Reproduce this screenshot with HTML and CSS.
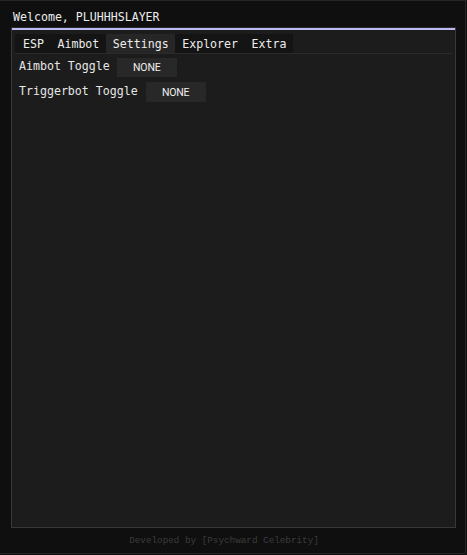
FILE: index.html
```html
<!DOCTYPE html>
<html>
<head>
<meta charset="utf-8">
<link rel="stylesheet" href="styles.css">
</head>
<body>
<div class="window">
  <div class="title">Welcome, PLUHHHSLAYER</div>
  <div class="panel">
    <div class="tabs">
      <span class="tab">ESP</span>
      <span class="tab">Aimbot</span>
      <span class="tab active">Settings</span>
      <span class="tab">Explorer</span>
      <span class="tab">Extra</span>
    </div>
    <div class="sep"></div>
    <div class="content">
      <div class="row">
        <span class="label">Aimbot Toggle</span>
        <span class="btn">NONE</span>
      </div>
      <div class="row">
        <span class="label">Triggerbot Toggle</span>
        <span class="btn">NONE</span>
      </div>
    </div>
  </div>
  <div class="footer">Developed by [Psychward Celebrity]</div>
</div>
</body>
</html>
```

FILE: styles.css
```css
html, body {
  margin: 0;
  padding: 0;
  background: #0f0f0f;
}
body {
  font-family: "DejaVu Sans Mono", "Liberation Mono", monospace;
  font-size: 11.6px;
  color: #e6e6e6;
}
.window {
  box-sizing: border-box;
  width: 466px;
  height: 554px;
  background: #0f0f0f;
  border-top: 1px solid #242424;
  border-right: 1px solid #242424;
  border-bottom: 1px solid #242424;
  display: flex;
  flex-direction: column;
}
.title {
  height: 26px;
  line-height: 13px;
  padding: 10px 0 0 13px;
  box-sizing: border-box;
  color: #ececec;
}
.panel {
  box-sizing: border-box;
  margin-left: 11px;
  width: 445px;
  height: 501px;
  background: #1c1c1c;
  border: 1px solid #383838;
  border-top: 1px solid #2a2a2a;
  box-shadow: inset 0 2px 0 #bbbbf2;
  padding: 6px 3px 0 3px;
  display: flex;
  flex-direction: column;
}
.tabs {
  display: flex;
  align-self: flex-start;
  background: #141414;
  height: 19px;
  padding-left: 1px;
  padding-right: 0;
}
.tab {
  padding: 1px 6.5px 0 7px;
  line-height: 19px;
  height: 18px;
  color: #ececec;
}
.tab.active {
  background: #262626;
}
.sep {
  height: 1px;
  background: #2a2a2a;
}
.content {
  padding: 4px 0 0 4px;
  display: flex;
  flex-direction: column;
  gap: 5px;
}
.row {
  display: flex;
  align-items: flex-start;
  gap: 7px;
}
.label {
  line-height: 13px;
  padding-top: 2px;
  color: #e6e6e6;
}
.row + .row .label {
  padding-top: 3px;
}
.row + .row .btn {
  margin-left: 1px;
  height: 20px;
  line-height: 21px;
}
.btn {
  width: 60px;
  height: 19px;
  line-height: 20px;
  background: #282828;
  text-align: center;
  font-family: Roboto, "Liberation Sans", sans-serif;
  font-size: 10.5px;
  letter-spacing: -0.2px;
  color: #f0f0f0;
}
.footer {
  flex: 1;
  text-align: center;
  padding-right: 17px;
  padding-top: 7px;
  font-family: "Liberation Mono", monospace;
  font-size: 9.3px;
  line-height: 12px;
  color: #3c3c3c;
}
```
